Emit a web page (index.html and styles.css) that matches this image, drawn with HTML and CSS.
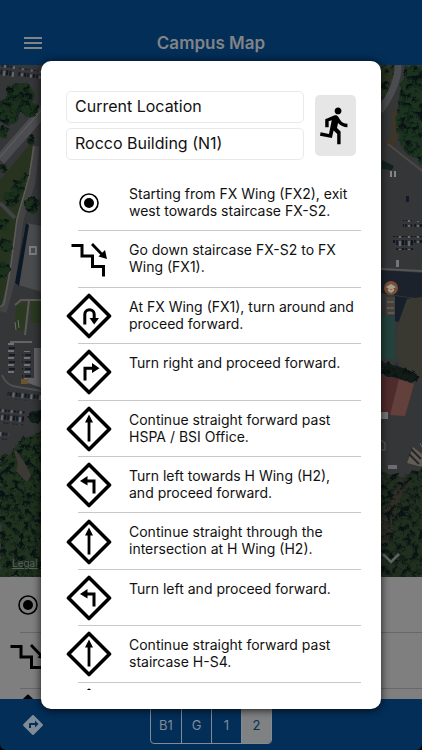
FILE: index.html
```html
<!DOCTYPE html>
<html lang="en">
<head>
<meta charset="utf-8">
<meta name="viewport" content="width=device-width, initial-scale=1">
<title>Campus Map</title>
<link rel="stylesheet" href="styles.css">
</head>
<body>
<svg class="sprite" aria-hidden="true">
  <symbol id="start" viewBox="0 0 46 46"><circle cx="23" cy="23" r="9" fill="none" stroke="currentColor" stroke-width="1.6"/><circle cx="23" cy="23" r="5" fill="currentColor"/></symbol>
  <symbol id="stairs" viewBox="0 0 46 46"><path d="M5.500 8.500H16V19H26.500V29.500H37.500V39.500" fill="none" stroke="currentColor" stroke-width="3"/><path d="M26 7L36 17.500" stroke="currentColor" stroke-width="2.800"/><path d="M41 22L32.500 19.500L39 13Z" fill="currentColor"/></symbol>
  <symbol id="sign" viewBox="0 0 46 46"><path d="M23 2.500L43.500 23L23 43.500L2.500 23Z" fill="none" stroke="currentColor" stroke-width="3.600" stroke-linejoin="round"/></symbol>
  <symbol id="uturn" viewBox="0 0 46 46"><use href="#sign"/><path d="M18.800 31.500V21.500a4.700 4.700 0 0 1 9.400 0V26" fill="none" stroke="currentColor" stroke-width="3"/><path d="M23.500 25H33L28.200 31.500Z" fill="currentColor"/></symbol>
  <symbol id="right" viewBox="0 0 46 46"><use href="#sign"/><path d="M19 31.500V19.300H27" fill="none" stroke="currentColor" stroke-width="3"/><path d="M26 14L33.500 19.300L26 24Z" fill="currentColor"/></symbol>
  <symbol id="left" viewBox="0 0 46 46"><use href="#sign"/><path d="M28 31.500V19H20" fill="none" stroke="currentColor" stroke-width="3"/><path d="M21.500 14L14 19L21.500 23.500Z" fill="currentColor"/></symbol>
  <symbol id="straight" viewBox="0 0 46 46"><use href="#sign"/><path d="M23 35.500V14" stroke="currentColor" stroke-width="2.800"/><path d="M23 8.500L27 16.500H19Z" fill="currentColor"/></symbol>
</svg>

<div class="app">
  <header class="bar">
    <button class="menu" aria-label="Menu"><svg viewBox="0 0 18 12"><path d="M0 1H18M0 6H18M0 11H18" stroke="currentColor" stroke-width="1.800"/></svg></button>
    <h1 class="title">Campus Map</h1>
  </header>

  <section class="map" aria-label="Map">
    <svg class="aerial" viewBox="0 65 422 512" preserveAspectRatio="xMidYMid slice">
      <defs>
        <filter id="leaf" x="-5%" y="-5%" width="110%" height="110%" color-interpolation-filters="sRGB">
          <feTurbulence type="fractalNoise" baseFrequency="0.160" numOctaves="3" seed="8" result="n"/>
          <feColorMatrix in="n" type="matrix" values="0 0 0 0 0.030  0 0 0 0 0.070  0 0 0 0 0.075  0 5 0 0 -2.300" result="d"/>
          <feComposite in="d" in2="SourceGraphic" operator="in" result="s"/>
          <feMerge result="m"><feMergeNode in="SourceGraphic"/><feMergeNode in="s"/></feMerge>
          <feDisplacementMap in="m" in2="n" scale="7" xChannelSelector="R" yChannelSelector="G"/>
        </filter>
        <pattern id="cars" width="9" height="8" patternUnits="userSpaceOnUse"><rect x="0" y="0" width="2" height="5" fill="#151c2a"/><rect x="3" y="1" width="2" height="5" fill="#64686f"/><rect x="6" y="0" width="2" height="5" fill="#12151c"/></pattern>
        <pattern id="carsSide" width="8" height="7" patternUnits="userSpaceOnUse"><rect width="6" height="2" fill="#6f7175"/><rect x="1" y="4" width="6" height="2" fill="#141c29"/></pattern>
      </defs>
      <rect y="65" width="422" height="512" fill="#353638"/>

      <!-- west side: lawns, road, parking and woods -->
      <path d="M0 180L34 139L32 180L20 214L12 245L0 300Z" fill="#27331f"/>
      <path d="M0 203L16 219L11 250L4 303L0 306Z" fill="#26341f"/>
      <path d="M0 203L15 218" stroke="#414244" stroke-width="4"/>
      <path d="M0 160L46 108" stroke="#4b4c4f" stroke-width="11"/>
      <path d="M0 157L46 105" stroke="#64645f" stroke-width="1"/>
      <path d="M36 146L32 182L20 220L12 280L3 312" fill="none" stroke="#434346" stroke-width="7"/>
      <path d="M34 146L29 177L17 219L11 265L4 304L0 307" fill="none" stroke="#5c5c54" stroke-width="1.500"/>
      <g fill="#1b311c" filter="url(#leaf)">
        <circle cx="20" cy="98" r="15"/><circle cx="7" cy="112" r="13"/><circle cx="30" cy="108" r="9"/><circle cx="3" cy="132" r="6"/>
        <circle cx="3" cy="168" r="5"/><circle cx="18" cy="187" r="7"/><circle cx="11" cy="199" r="8"/><circle cx="24" cy="177" r="4"/><circle cx="31" cy="140" r="5"/><circle cx="32" cy="205" r="8"/><circle cx="6" cy="246" r="7"/><circle cx="2" cy="270" r="8"/><circle cx="3" cy="225" r="6"/>
      </g>
      <g transform="rotate(8 20 75)"><rect x="0" y="67" width="14" height="12" fill="url(#cars)"/><rect x="18" y="68" width="24" height="8" fill="url(#cars)"/></g>
      <path d="M26 223L42 226V292L15 284Z" fill="#4a4b4d"/><path d="M26 223L29 225L19 286L15 283Z" fill="#0b1725"/>
      <path d="M30 247h6v7h-6z" fill="none" stroke="#7a7c7f" stroke-width="2"/>
      <path d="M16 306L27 302V330H14Z" fill="#2b3920"/><path d="M31 300H42V323H31Z" fill="#2b3920"/>
      <path d="M15 305L21 300H42M29 300L25 335" fill="none" stroke="#5c5a52" stroke-width="2"/>
      <path d="M15 322l1 8M18 320l1 8" stroke="#6c6e74" stroke-width="1"/>
      <rect x="8" y="342" width="7" height="33" fill="url(#carsSide)"/><rect x="22" y="351" width="9" height="31" fill="url(#carsSide)"/>
      <path d="M10 342H32" stroke="#646465" stroke-width="2"/>
      <path d="M34 348H42V388L28 383V378H34Z" fill="#616165"/><path d="M21 379h7v5h-7z" fill="#6b5530"/>
      <path d="M2 375Q6 386 18 387L42 391" fill="none" stroke="#505053" stroke-width="2"/>
      <g transform="rotate(6 20 400)"><rect x="7" y="393" width="35" height="7" fill="url(#cars)"/><rect x="0" y="411" width="26" height="14" fill="url(#cars)"/><rect x="0" y="434" width="12" height="7" fill="url(#cars)"/></g>
      <path d="M0 458L15 449L22 437L42 432V577H0Z" fill="#20331e" filter="url(#leaf)"/>
      <path d="M14 452Q20 463 16 471L27 482L31 476L26 465L16 450Z" fill="#3d3a35"/>
      <circle cx="35" cy="417" r="7" fill="#12221a" filter="url(#leaf)"/>

      <!-- east side: forest, car park, roofs -->
      <path d="M380 65H397L382 110Z" fill="#28321f" filter="url(#leaf)"/>
      <path d="M398 65Q399 84 380 111" fill="none" stroke="#4b4c4f" stroke-width="7"/>
      <path d="M395 110Q400 134 388 146" fill="none" stroke="#3b352a" stroke-width="9"/>
      <path d="M404 65H426V167L401 148L396 122L400 90Z" fill="#1c331f" filter="url(#leaf)"/>
      <path d="M388 144L426 174" stroke="#4d4945" stroke-width="2"/>
      <path d="M382 160L394 166L392 170L382 169Z" fill="#13201c"/>
      <path d="M391 171v6M395 171v6" stroke="#85868a" stroke-width="2"/>
      <g><rect x="406" y="196" width="3" height="6" fill="#111a29"/><rect x="403" y="220" width="9" height="7" fill="url(#cars)"/><rect x="414" y="221" width="8" height="6" fill="url(#cars)"/><rect x="392" y="236" width="30" height="7" fill="url(#cars)"/><rect x="395" y="243" width="18" height="7" fill="url(#cars)"/><rect x="396" y="260" width="3" height="7" fill="#72757a"/></g>
      <path d="M381 270L422 273V299L381 293Z" fill="#1c222c"/><path d="M381 269L422 271" stroke="#555757" stroke-width="2"/>
      <path d="M395 296L410 298L411 325L395 321Z" fill="#171f2a"/>
      <path d="M407 299L422 297V382L405 372L396 353L398 324Z" fill="#3a3931"/>
      <path d="M381 316H395V360L381 358Z" fill="#23423c"/>
      <path d="M386 297h9v18h-9z" fill="#45413b"/><path d="M387 302h7M387 308h7M388 313h6" stroke="#77736c"/>
      <circle cx="391" cy="288" r="7" fill="#775037"/><path d="M386 287l5-3 5 3-5 3zm2 2v2l3 2 3-2v-2" fill="#a69d91"/>
      <path d="M381 360L404 367L421 378L413 383L381 375Z" fill="#141c18" filter="url(#leaf)"/>
      <path d="M381 376L399 379L390 415L381 411Z" fill="#502b2c"/><path d="M399 379L414 384L405 416L390 415Z" fill="#64403c"/>
      <path d="M381 412h7v7h-7z" fill="#77787b"/><path d="M413 447L422 454V467L407 463Z" fill="#625c52"/><path d="M411 449l10 10M409 454l10 10" stroke="#25272a" stroke-width="2"/>
      <path d="M388 465h9v4h-9z" fill="#6a6c72"/><path d="M381 440l4 3v7h-4M420 443l2 4" stroke="#66676a" stroke-width="1" fill="none"/>
      <path d="M381 471L402 476L426 467V580H381Z" fill="#212f1f" filter="url(#leaf)"/>
      <path d="M399 477L411 483L397 505L390 538L381 545V519L391 498Z" fill="#302f26" filter="url(#leaf)"/>
    </svg>
    <a class="legal" href="#legal">Legal</a>
    <button class="collapse" aria-label="Collapse map"><svg viewBox="0 0 18 12"><path d="M1 2L9 10L17 2" fill="none" stroke="currentColor" stroke-width="2.500"/></svg></button>
  </section>

  <ul class="tray" aria-hidden="true">
    <li><svg class="icon"><use href="#start"/></svg></li>
    <li><svg class="icon"><use href="#stairs"/></svg></li>
    <li><svg class="icon"><use href="#uturn"/></svg></li>
  </ul>

  <footer class="foot">
    <button class="route" aria-label="Directions"><svg viewBox="0 0 24 24"><path fill="currentColor" d="M21.710 11.290l-9-9c-.39-.39-1.020-.39-1.410 0l-9 9c-.39.39-.39 1.020 0 1.410l9 9c.39.39 1.020.39 1.410 0l9-9c.39-.38.39-1.010 0-1.410zM14 14.500V12h-4v3H8v-4c0-.55.45-1 1-1h5V7.500l3.500 3.500-3.500 3.500z"/></svg></button>
    <div class="floors" role="group" aria-label="Floor">
      <button>B1</button><button>G</button><button>1</button><button class="on" aria-pressed="true">2</button>
    </div>
  </footer>
</div>

<main class="dialog" role="dialog" aria-label="Directions">
  <form class="trip">
    <div class="fields">
      <input type="text" aria-label="From" value="Current Location">
      <input type="text" aria-label="To" value="Rocco Building (N1)">
    </div>
    <button class="mode" type="button" aria-label="On foot"><svg viewBox="0 0 24 24"><path fill="currentColor" d="M13.490 5.480c1.100 0 2-.9 2-2s-.9-2-2-2-2 .9-2 2 .9 2 2 2zm-3.600 13.900l1-4.400 2.100 2v6h2v-7.500l-2.100-2 .6-3c1.300 1.500 3.300 2.500 5.500 2.500v-2c-1.900 0-3.500-1-4.300-2.400l-1-1.600c-.4-.6-1-1-1.700-1-.3 0-.5.1-.8.1l-5.200 2.200v4.700h2v-3.400l1.800-.7-1.600 8.100-4.900-1-.4 2 7 1.400z"/></svg></button>
  </form>
  <ol class="steps">
    <li><svg class="icon"><use href="#start"/></svg><p>Starting from FX Wing (FX2), exit west towards staircase FX-S2.</p></li>
    <li><svg class="icon"><use href="#stairs"/></svg><p>Go down staircase FX-S2 to FX Wing (FX1).</p></li>
    <li><svg class="icon"><use href="#uturn"/></svg><p>At FX Wing (FX1), turn around and proceed forward.</p></li>
    <li><svg class="icon"><use href="#right"/></svg><p>Turn right and proceed forward.</p></li>
    <li><svg class="icon"><use href="#straight"/></svg><p>Continue straight forward past HSPA / BSI Office.</p></li>
    <li><svg class="icon"><use href="#left"/></svg><p>Turn left towards H Wing (H2), and proceed forward.</p></li>
    <li><svg class="icon"><use href="#straight"/></svg><p>Continue straight through the intersection at H Wing (H2).</p></li>
    <li><svg class="icon"><use href="#left"/></svg><p>Turn left and proceed forward.</p></li>
    <li><svg class="icon"><use href="#straight"/></svg><p>Continue straight forward past staircase H-S4.</p></li>
    <li><svg class="icon"><use href="#straight"/></svg></li>
  </ol>
</main>
</body>
</html>
```
FILE: styles.css
```css
* { box-sizing: border-box; }

html, body { height: 100%; }

body {
  margin: 0;
  overflow: hidden;
  background: #000;
  color: #111;
  font-family: Inter, "Liberation Sans", sans-serif;
}

button {
  margin: 0;
  padding: 0;
  border: 0;
  background: none;
  color: inherit;
  font: inherit;
}

button svg { display: block; }

ul, ol { margin: 0; padding: 0; list-style: none; }

.sprite { position: absolute; width: 0; height: 0; }

.icon { display: block; flex: none; width: 46px; height: 46px; color: #000; }

/* Dimmed screen behind the dialog */
.app {
  display: flex;
  flex-direction: column;
  height: 100%;
  overflow: hidden;
  border-radius: 0 0 6px 6px;
}

.bar {
  display: grid;
  grid-template-columns: 1fr auto 1fr;
  align-items: center;
  height: 65px;
  padding: 20px 24px 0;
  background: #032e58;
  color: #808487;
}

.menu { justify-self: start; }
.menu svg { width: 18px; height: 12px; }
.title { margin: 0; font-size: 17px; line-height: 22px; font-weight: 600; }

.map { position: relative; flex: 1; min-height: 0; overflow: hidden; }
.aerial { display: block; width: 100%; height: 100%; }

.legal {
  position: absolute;
  left: 12px;
  bottom: 8px;
  color: #59615f;
  font-size: 10px;
  line-height: 12px;
}

.collapse { position: absolute; right: 22px; bottom: 13px; color: #5f6462; }
.collapse svg { width: 18px; height: 12px; }

.tray { height: 122px; overflow: hidden; background: #7f7f7f; }

.tray li {
  display: flex;
  align-items: center;
  height: 56px;
  padding-left: 5px;
  background: linear-gradient(#686868, #686868) 20px 100% / 100% 1px no-repeat;
}

.foot {
  display: grid;
  grid-template-columns: 1fr auto 1fr;
  align-items: center;
  height: 51px;
  padding: 0 21px;
  background: #032e58;
  color: #7f8b97;
}

.route { justify-self: start; }
.route svg { width: 24px; height: 24px; }

.floors {
  display: flex;
  height: 39px;
  border: 1px solid #7f8b97;
  border-radius: 4px;
  overflow: hidden;
  font-size: 13px;
}

.floors button { width: 30px; }
.floors button + button { border-left: 1px solid #7f8b97; }
.floors .on { background: #7f8182; color: #032e58; }

/* Directions dialog */
.dialog {
  position: absolute;
  inset: 61px 41px 41px;
  display: flex;
  flex-direction: column;
  padding: 30px 20px 19px 25px;
  border-radius: 10px;
  background: #fff;
  box-shadow: 0 1px 8px rgba(0, 0, 0, 0.8);
}

.trip {
  display: flex;
  align-items: center;
  gap: 11px;
  margin-bottom: 15px;
  padding-right: 5px;
}

.fields { display: grid; flex: 1; gap: 5px; min-width: 0; }

.fields input {
  width: 100%;
  height: 32px;
  margin: 0;
  padding: 0 8px 2px;
  border: 1px solid #e9e9e9;
  border-radius: 5px;
  background: #fff;
  color: #111;
  font: 16px/22px Inter, "Liberation Sans", sans-serif;
}

.mode {
  display: grid;
  place-items: center;
  width: 41px;
  height: 61px;
  border-radius: 5px;
  background: #e6e6e6;
  color: #000;
}

.mode svg { width: 41px; height: 41px; }

/* Nine steps fill the visible list; the next one peeks in below */
.steps {
  display: grid;
  flex: 1;
  grid-auto-rows: 10.95%;
  min-height: 0;
  overflow: hidden;
}

.steps li {
  display: flex;
  align-items: center;
  gap: 17px;
  background: linear-gradient(#c8c8c8, #c8c8c8) 12px 100% / 100% 1px no-repeat;
}

.steps p {
  align-self: flex-start;
  flex: 1;
  margin: 0;
  padding: 10px 5px 0 0;
  font-size: 14px;
  line-height: 17px;
}
```
